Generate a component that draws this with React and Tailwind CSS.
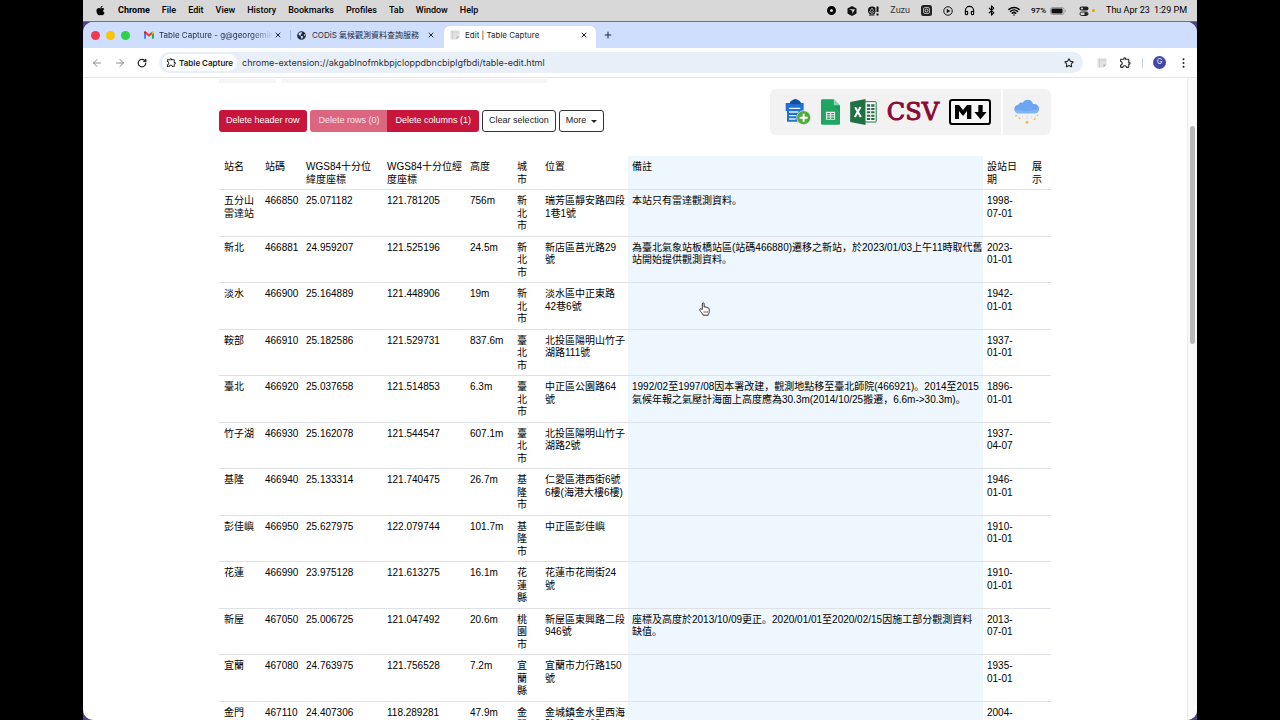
import React from 'react';
import { ArrowLeft, ArrowRight, Bluetooth, Headphones, Plus, RotateCw, Star, Wifi, X } from 'lucide-react';
import { FaApple, FaGlobeAmericas } from 'react-icons/fa';
import { MdOutlineExtension } from 'react-icons/md';

const menus = ['File', 'Edit', 'View', 'History', 'Bookmarks', 'Profiles', 'Tab', 'Window', 'Help'];

const columns = [
  { label: '站名', width: 'w-[41px]' },
  { label: '站碼', width: 'w-[41px]' },
  { label: 'WGS84十分位緯度座標', width: 'w-[81px]' },
  { label: 'WGS84十分位經度座標', width: 'w-[83px]' },
  { label: '高度', width: 'w-[47px]' },
  { label: '城市', width: 'w-[28px]' },
  { label: '位置', width: 'w-[88px]' },
  { label: '備註', width: '', selected: true },
  { label: '設站日期', width: 'w-[45px]' },
  { label: '展示', width: 'w-[23px]' },
];

const rows = [
  ['五分山雷達站', '466850', '25.071182', '121.781205', '756m', '新北市', '瑞芳區靜安路四段1巷1號', '本站只有雷達觀測資料。', '1998-07-01', ''],
  ['新北', '466881', '24.959207', '121.525196', '24.5m', '新北市', '新店區莒光路29號', '為臺北氣象站板橋站區(站碼466880)遷移之新站，於2023/01/03上午11時取代舊站開始提供觀測資料。', '2023-01-01', ''],
  ['淡水', '466900', '25.164889', '121.448906', '19m', '新北市', '淡水區中正東路42巷6號', '', '1942-01-01', ''],
  ['鞍部', '466910', '25.182586', '121.529731', '837.6m', '臺北市', '北投區陽明山竹子湖路111號', '', '1937-01-01', ''],
  ['臺北', '466920', '25.037658', '121.514853', '6.3m', '臺北市', '中正區公園路64號', '1992/02至1997/08因本署改建，觀測地點移至臺北師院(466921)。2014至2015氣候年報之氣壓計海面上高度應為30.3m(2014/10/25搬遷，6.6m->30.3m)。', '1896-01-01', ''],
  ['竹子湖', '466930', '25.162078', '121.544547', '607.1m', '臺北市', '北投區陽明山竹子湖路2號', '', '1937-04-07', ''],
  ['基隆', '466940', '25.133314', '121.740475', '26.7m', '基隆市', '仁愛區港西街6號6樓(海港大樓6樓)', '', '1946-01-01', ''],
  ['彭佳嶼', '466950', '25.627975', '122.079744', '101.7m', '基隆市', '中正區彭佳嶼', '', '1910-01-01', ''],
  ['花蓮', '466990', '23.975128', '121.613275', '16.1m', '花蓮縣', '花蓮市花崗街24號', '', '1910-01-01', ''],
  ['新屋', '467050', '25.006725', '121.047492', '20.6m', '桃園市', '新屋區東興路二段946號', '座標及高度於2013/10/09更正。2020/01/01至2020/02/15因施工部分觀測資料\n缺值。', '2013-07-01', ''],
  ['宜蘭', '467080', '24.763975', '121.756528', '7.2m', '宜蘭縣', '宜蘭市力行路150號', '', '1935-01-01', ''],
  ['金門', '467110', '24.407306', '118.289281', '47.9m', '金門縣', '金城鎮金水里西海路一段111號', '', '2004-01-01', ''],
];

const cellPadding = (column) => {
  if (column.selected) return 'bg-[#eef6fe] pl-1';
  if (column.label === '城市') return 'pl-[5px] pr-2';
  if (column.label.startsWith('設') || column.label.startsWith('展')) return 'pl-1 pr-1';
  return 'pl-[5px] pr-[3px]';
};

const GmailIcon = () => (
  <svg viewBox="0 0 24 18" className="h-2 w-[10px] shrink-0">
    <path d="M0 2v14a2 2 0 0 0 2 2h3V7L0 3z" fill="#4285f4" />
    <path d="M19 18h3a2 2 0 0 0 2-2V3l-5 4z" fill="#34a853" />
    <path d="M5 1l7 5.500 7-5.500v7l-7 5.300L5 8z" fill="#ea4335" />
    <path d="M19 1v7l5-4V2.500C24 0 21-1 19 1z" fill="#fbbc04" />
    <path d="M5 1v7L0 4V2.500C0 0 3-1 5 1z" fill="#c5221f" />
  </svg>
);

const NoteIcon = () => (
  <svg viewBox="0 0 20 20" className="h-[10px] w-[10px] shrink-0">
    <path d="M1 1h18v12l-6 6H1z" fill="#e2e2e2" />
    <path d="M1 4h18M5 1v18" stroke="#cacaca" strokeWidth="1.500" />
    <path d="M19 13l-6 6v-6z" fill="#b5b5b5" />
  </svg>
);

const CubeIcon = () => (
  <svg viewBox="0 0 20 20" className="h-[10px] w-[10px]">
    <path d="M10 0l9 5v10l-9 5-9-5V5z" fill="#111" />
    <path d="M4 6.500h12L10.500 16V9.500z" fill="#d8d8d8" />
  </svg>
);

const AlertIcon = () => (
  <svg viewBox="0 0 22 20" className="h-[10px] w-[11px]">
    <circle cx="8" cy="9" r="8" fill="#111" />
    <path d="M3 12l5-8 3 5-5 4zM6 16l7-4" stroke="#d8d8d8" strokeWidth="1.500" fill="none" />
    <rect x="15" y="0" width="6" height="20" fill="#d8d8d8" />
    <path d="M17 1h4v11h-4zM17 15h4v4h-4z" fill="#111" />
    <path d="M2 17h11v2H2z" fill="#111" />
  </svg>
);

const SquareIcon = () => (
  <svg viewBox="0 0 22 22" className="h-[11px] w-[11px]">
    <rect width="22" height="22" rx="5" fill="#222" />
    <rect x="5" y="5" width="12" height="12" rx="3" fill="none" stroke="#d8d8d8" strokeWidth="1.500" />
    <circle cx="11" cy="11" r="3" fill="none" stroke="#d8d8d8" strokeWidth="2" />
  </svg>
);

const PlayIcon = () => (
  <svg viewBox="0 0 20 20" className="h-[10px] w-[10px]">
    <circle cx="10" cy="10" r="8.500" fill="none" stroke="#111" strokeWidth="2" />
    <path d="M7.500 5.500l7 4.500-7 4.500z" fill="#111" />
  </svg>
);

const BatteryIcon = () => (
  <svg viewBox="0 0 32 16" className="h-2 w-4">
    <rect x="1" y="1" width="27" height="14" rx="4" fill="none" stroke="#888" strokeWidth="1.500" />
    <rect x="3" y="3" width="22" height="10" rx="2" fill="#111" />
    <path d="M30 5.500v5c2-1 2-4 0-5z" fill="#888" />
  </svg>
);

const ControlCenterIcon = () => (
  <svg viewBox="0 0 20 20" className="h-[10px] w-[10px]">
    <rect x="1" y="1" width="18" height="8" rx="4" fill="#222" />
    <circle cx="6" cy="5" r="2.200" fill="#d8d8d8" />
    <rect x="2" y="12" width="16" height="7" rx="3.500" fill="none" stroke="#222" strokeWidth="2" />
    <circle cx="14" cy="15.500" r="3.500" fill="#222" />
  </svg>
);

const MenuBar = () => (
  <header className="flex h-[22px] shrink-0 items-center justify-between border-b border-[#6d6f94] bg-[#d8d8d8] pl-3 pr-[10px] font-['Roboto',sans-serif] text-[9px] font-medium text-black">
    <nav className="flex items-center gap-3">
      <FaApple className="h-[11px] w-[11px]" />
      <span className="font-bold">Chrome</span>
      {menus.map((menu) => (
        <span key={menu}>{menu}</span>
      ))}
    </nav>
    <div className="flex items-center gap-[11px] whitespace-nowrap">
      <span className="h-[9px] w-[9px] rounded-full border-[3px] border-black" />
      <CubeIcon />
      <AlertIcon />
      <span className="font-normal text-[#333]">Zuzu</span>
      <SquareIcon />
      <PlayIcon />
      <Headphones className="h-[11px] w-[11px]" strokeWidth={2.5} />
      <Bluetooth className="h-[11px] w-[11px]" strokeWidth={2.5} />
      <Wifi className="h-3 w-3" strokeWidth={3} />
      <span className="flex items-center gap-1 text-[8px]">
        97%
        <BatteryIcon />
      </span>
      <span className="flex items-center gap-[3px] pl-[2px]">
        <ControlCenterIcon />
        <span className="h-[3px] w-[3px] rounded-full bg-[#f09a1a]" />
      </span>
      <span className="flex gap-1 font-normal">
        <span>Thu Apr 23</span>
        <span>1:29 PM</span>
      </span>
    </div>
  </header>
);

const CloseButton = () => (
  <button type="button" aria-label="Close tab" className="shrink-0">
    <X className="h-2 w-2" strokeWidth={3} />
  </button>
);

const TabStrip = () => (
  <div className="flex h-[26px] shrink-0 items-end bg-[#cfdefc] pl-2 text-[8px] text-[#1f2a40]">
    <div className="flex h-full w-[46px] shrink-0 items-center gap-[6px]">
      <span className="h-[9px] w-[9px] rounded-full bg-[#f2384f]" />
      <span className="h-[9px] w-[9px] rounded-full bg-[#f8c308]" />
      <span className="h-[9px] w-[9px] rounded-full bg-[#2dd14a]" />
    </div>
    <div className="flex h-full w-[153px] items-center justify-between pl-[7px] pr-2">
      <div className="flex items-center gap-[5px]">
        <GmailIcon />
        <span className="whitespace-nowrap bg-linear-to-r from-[#1f2a40] from-80% to-[#cfdefc] bg-clip-text text-transparent">
          Table Capture - g@georgemik
        </span>
      </div>
      <CloseButton />
    </div>
    <span className="mb-2 h-[10px] w-px bg-[#a8bde8]" />
    <div className="flex h-full w-[153px] items-center gap-[6px] pl-[6px] pr-[9px]">
      <FaGlobeAmericas className="h-[9px] w-[9px] shrink-0" />
      <span className="grow whitespace-nowrap">CODiS 氣候觀測資料查詢服務</span>
      <CloseButton />
    </div>
    <div className="flex h-[22px] w-[152px] items-center gap-[5px] rounded-t-md bg-white pb-1 pl-[6px] pr-2 text-[#1f1f1f]">
      <NoteIcon />
      <span className="grow whitespace-nowrap">Edit | Table Capture</span>
      <CloseButton />
    </div>
    <button type="button" aria-label="New tab" className="flex h-full items-center pl-[7px]">
      <Plus className="h-[10px] w-[10px]" strokeWidth={2.5} />
    </button>
  </div>
);

const Toolbar = () => (
  <div className="flex h-[30px] shrink-0 items-center border-b border-[#e2e5ea] bg-white pl-2 pr-3 text-[#222]">
    <div className="flex items-center gap-[11px] pr-3">
      <ArrowLeft className="h-3 w-3 text-[#8b8b8b]" />
      <ArrowRight className="h-3 w-3 text-[#8b8b8b]" />
      <RotateCw className="h-[10px] w-[10px]" strokeWidth={3} />
    </div>
    <div className="flex h-[21px] grow items-center gap-[5px] rounded-full bg-[#e9eff8] pl-[3px] pr-[9px]">
      <span className="flex h-[17px] shrink-0 items-center gap-[2px] rounded-full bg-white px-1 text-[8px] font-semibold">
        <MdOutlineExtension className="h-[11px] w-[11px]" />
        Table Capture
      </span>
      <input
        aria-label="Address"
        className="min-w-0 grow bg-transparent text-[9px] text-[#2b3038] outline-none"
        defaultValue="chrome-extension://akgablnofmkbpjcloppdbncbiplgfbdi/table-edit.html"
      />
      <Star className="h-[10px] w-[10px]" strokeWidth={2.5} />
    </div>
    <div className="flex items-center pl-[14px]">
      <NoteIcon />
      <MdOutlineExtension className="ml-3 h-[13px] w-[13px]" />
      <span className="ml-[10px] h-[10px] w-px bg-[#c5d3ee]" />
      <span className="ml-[10px] flex h-[13px] w-[13px] items-center justify-center rounded-full bg-[#4149a8] text-[7px] text-white">G</span>
      <svg viewBox="0 0 4 16" className="ml-4 h-[10px] w-[3px]" fill="#222">
        <circle cx="2" cy="2" r="1.600" />
        <circle cx="2" cy="8" r="1.600" />
        <circle cx="2" cy="14" r="1.600" />
      </svg>
    </div>
  </div>
);

const ClipboardIcon = () => (
  <svg viewBox="0 0 78 78" className="h-[26px] w-[26px]">
    <path d="M2 12h13c3-15 29-15 32 0h9v24L36 60l4 8H6V36H2z" fill="#2272d6" />
    <path d="M14 16c0-10 6-10 9-11 3-6 13-6 16 0 3 1 9 1 9 11z" fill="#164f9f" />
    <path d="M12 28h34M12 39h28M12 50h22M12 60h20" stroke="#e8f1fc" strokeWidth="4" />
    <circle cx="56" cy="56" r="21" fill="#4fac3c" stroke="#f2f2f2" strokeWidth="2" />
    <path d="M56 44v24M44 56h24" stroke="#fff" strokeWidth="6" />
  </svg>
);

const SheetsIcon = () => (
  <svg viewBox="0 0 58 78" className="h-[26px] w-[19px]">
    <path d="M4 0h35l19 19v55a4 4 0 0 1-4 4H4a4 4 0 0 1-4-4V4a4 4 0 0 1 4-4z" fill="#1fa561" />
    <path d="M39 0l19 19H39z" fill="#8ed1b1" />
    <path d="M39 19h19v18z" fill="#148a4f" opacity=".5" />
    <path d="M15 38h28v25H15z" fill="#f1f1f1" />
    <path d="M18 42h10v4H18zM31 42h9v4h-9zM18 49h10v4H18zM31 49h9v4h-9zM18 56h10v4H18zM31 56h9v4h-9z" fill="#1fa561" />
  </svg>
);

const ExcelIcon = () => (
  <svg viewBox="0 0 80 78" className="h-[26px] w-[27px]">
    <rect x="42" y="8" width="36" height="61" rx="2" fill="#fff" stroke="#207245" strokeWidth="3" />
    <path d="M50 16h10v7H50zM63 16h10v7H63zM50 27h10v6H50zM63 27h10v6H63zM50 37h10v6H50zM63 37h10v6H63zM50 47h10v6H50zM63 47h10v6H63zM50 57h10v6H50zM63 57h10v6H63z" fill="#207245" />
    <path d="M0 9L46 0v78L0 69z" fill="#207245" />
    <path d="M15 25l17 29M31 24L14 54" stroke="#fff" strokeWidth="6" />
  </svg>
);

const MarkdownIcon = () => (
  <svg viewBox="0 0 126 78" className="h-[26px] w-[42px]">
    <rect x="3" y="3" width="120" height="72" rx="7" fill="#f7f7f7" stroke="#000" strokeWidth="6" />
    <path d="M18 60V18h12l12 15 12-15h13v42H54V36L42 51 30 36v24z" />
    <path d="M88 18h13v21h12L94.500 61 76 39h12z" />
  </svg>
);

const CloudIcon = () => (
  <svg viewBox="0 0 78 78" className="h-[26px] w-[26px]">
    <path d="M15 43a13 13 0 0 1-2-26C16 9 23 10 26 11 33-3 55 0 57 15c11-1 18 5 18 14s-6 14-14 14z" fill="#6ea5f3" />
    <path d="M15 43a13 13 0 0 1-13-12c14 6 52 8 73-3 0 9-6 15-14 15z" fill="#7eb4f8" />
    <path d="M12 48v8M26 50v7M39 48v13M53 50v7M66 48v8" stroke="#cfe2fb" strokeWidth="3" />
    <g fill="#f3bd4e">
      <circle cx="6" cy="50" r="2.500" />
      <circle cx="17" cy="58" r="3" />
      <circle cx="39" cy="70" r="4.500" />
      <circle cx="62" cy="60" r="3" />
      <circle cx="71" cy="49" r="2.500" />
    </g>
  </svg>
);

const ExportPanel = () => (
  <div className="flex h-[46px] overflow-hidden rounded-md bg-[#f2f2f2]">
    <div className="flex items-center gap-[10px] border-r-2 border-white pl-[15px] pr-[10px]">
      <button type="button" aria-label="Copy to clipboard"><ClipboardIcon /></button>
      <button type="button" aria-label="Google Sheets"><SheetsIcon /></button>
      <button type="button" aria-label="Excel"><ExcelIcon /></button>
      <button type="button" className="font-['DejaVu_Serif',serif] text-2xl leading-none text-[#8b0a35] [-webkit-text-stroke:1px_#8b0a35]">CSV</button>
      <button type="button" aria-label="Markdown"><MarkdownIcon /></button>
    </div>
    <button type="button" aria-label="Cloud" className="px-[11px]"><CloudIcon /></button>
  </div>
);

const Actions = () => (
  <div className="mb-[3px] flex gap-[3px] text-[9px] text-white">
    <button type="button" className="h-[22px] rounded-[3px] bg-[#c8153c] px-[7px]">Delete header row</button>
    <div className="flex overflow-hidden rounded-[3px]">
      <button type="button" disabled className="h-[22px] bg-[#dc6680] pl-[9px] pr-[7px] text-[#fbe4e9]">Delete rows (0)</button>
      <button type="button" className="h-[22px] bg-[#c8153c] pl-[9px] pr-2">Delete columns (1)</button>
    </div>
    <button type="button" className="h-[22px] rounded-[3px] border border-[#333] px-[6px] text-[#222]">Clear selection</button>
    <button type="button" className="flex h-[22px] items-center gap-[5px] rounded-[3px] border border-[#333] px-[6px] text-[#222]">
      More
      <span className="border-x-[3px] border-t-[3px] border-x-transparent border-t-[#222]" />
    </button>
  </div>
);

const StationTable = () => (
  <table className="mt-[21px] w-full table-fixed border-collapse text-left text-[10px] leading-tight text-black">
    <thead>
      <tr className="border-b border-[#dee2e6]">
        {columns.map((column) => (
          <th
            key={column.label}
            scope="col"
            className={`${column.width} ${cellPadding(column)} pb-[3px] pt-[5px] align-top font-normal`}
          >
            {column.label}
          </th>
        ))}
      </tr>
    </thead>
    <tbody>
      {rows.map((row) => (
        <tr key={row[1]} className="border-b border-[#dee2e6]">
          {row.map((cell, i) => (
            <td
              key={columns[i].label}
              className={`${cellPadding(columns[i])} whitespace-pre-line pb-[3px] pt-[5px] align-top`}
            >
              {cell}
            </td>
          ))}
        </tr>
      ))}
    </tbody>
  </table>
);

const HandCursor = () => (
  <svg viewBox="0 0 30 38" className="absolute left-[616px] top-[224px] h-[14px] w-[11px]">
    <path
      d="M9 20V5c0-4 5-4 5 0v9c1-2 5-2 5 1 2-2 5-1 5 2 2-1 4 0 4 3v6c0 5-3 7-3 10H11c0-4-7-9-9-14-1-3 2-5 4-3z"
      fill="#fff"
      stroke="#222"
      strokeWidth="2.500"
      strokeLinejoin="round"
    />
    <path d="M14 24v6M19 24v6M23 24v6" stroke="#222" strokeWidth="1.500" />
  </svg>
);

const App = () => {
  return (
    <div className="h-screen overflow-hidden bg-black px-[83px] font-['Inter','Noto_Sans_CJK_SC',sans-serif]">
      <div className="flex h-full flex-col bg-[#4b4585]">
        <MenuBar />
        <div className="flex min-h-0 grow flex-col overflow-hidden rounded-[10px] bg-white">
          <TabStrip />
          <Toolbar />
          <div className="relative flex min-h-0 grow">
            <main className="min-w-0 grow overflow-hidden px-4 font-['Liberation_Sans','Noto_Sans_CJK_SC',sans-serif]">
              <div className="mx-auto max-w-[832px]">
                <div className="flex gap-[6px] pt-px">
                  <span className="h-1 w-[57px] bg-[#f5f5f5]" />
                  <span className="h-1 w-[265px] bg-[#f5f5f5]" />
                </div>
                <div className="flex items-end justify-between pt-[6px]">
                  <Actions />
                  <ExportPanel />
                </div>
                <StationTable />
              </div>
            </main>
            <div className="w-[10px] shrink-0 border-l border-[#ececec] bg-[#fafafa] pl-[2px] pt-12">
              <div className="h-[218px] w-[5px] rounded-full bg-[#b9b9b9]" />
            </div>
            <HandCursor />
          </div>
        </div>
      </div>
    </div>
  );
};

export default App;
